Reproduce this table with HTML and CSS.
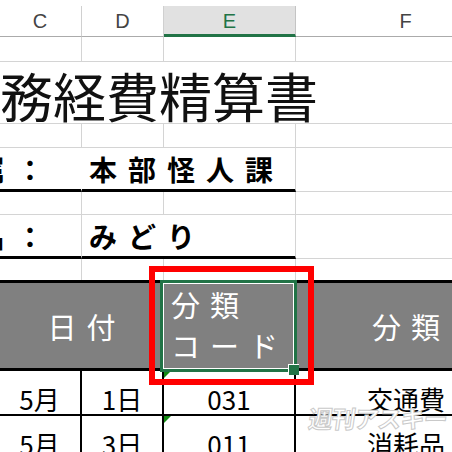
FILE: index.html
```html
<!DOCTYPE html>
<html lang="ja">
<head>
  <meta charset="UTF-8" />
  <meta name="viewport" content="width=device-width, initial-scale=1.0"/>
  <title>事務経費精算書</title>
  <link rel="stylesheet" href="styles.css">
</head>
<body>

  <div class="sheet">

    <!-- Column headers -->
    <div class="col-head">
      <div class="ch cb"></div>
      <div class="ch cc">C</div>
      <div class="ch cd">D</div>
      <div class="ch ce active">E</div>
      <div class="ch cf">F</div>
    </div>

    <!-- Rows -->
    <div class="row r-blank1">
      <div class="cell cb"></div>
      <div class="cell cc"></div>
      <div class="cell cd"></div>
      <div class="cell ce"></div>
      <div class="cell cf"></div>
    </div>

    <div class="row r-title">
      <div class="cell all title">事務経費精算書</div>
    </div>

    <div class="row r-blank2">
      <div class="cell cb"></div>
      <div class="cell cc"></div>
      <div class="cell cd"></div>
      <div class="cell ce"></div>
      <div class="cell cf"></div>
    </div>

    <div class="row r-field">
      <div class="cell bc label under no-right">所属：</div>
      <div class="cell de value under">本部怪人課</div>
      <div class="cell cf"></div>
    </div>

    <div class="row r-blank3">
      <div class="cell cb"></div>
      <div class="cell cc"></div>
      <div class="cell cd"></div>
      <div class="cell ce"></div>
      <div class="cell cf"></div>
    </div>

    <div class="row r-field">
      <div class="cell bc label under">氏名：</div>
      <div class="cell de value under">みどり</div>
      <div class="cell cf"></div>
    </div>

    <div class="row r-blank4">
      <div class="cell cb no-bottom"></div>
      <div class="cell cc no-bottom"></div>
      <div class="cell cd no-bottom"></div>
      <div class="cell ce no-bottom"></div>
      <div class="cell cf no-bottom"></div>
    </div>

    <div class="row r-head">
      <div class="cell cb hd"></div>
      <div class="cell cd2 hd center">日付</div>
      <div class="cell ce hd code">分類<br>コード</div>
      <div class="cell cf hd center">分類</div>
    </div>

    <div class="row r-data">
      <div class="cell cb dt"></div>
      <div class="cell cc dt">5月</div>
      <div class="cell cd dt">1日</div>
      <div class="cell ce dt flag">031</div>
      <div class="cell cf dt">交通費</div>
    </div>

    <div class="row r-data">
      <div class="cell cb dt"></div>
      <div class="cell cc dt">5月</div>
      <div class="cell cd dt">3日</div>
      <div class="cell ce dt flag">011</div>
      <div class="cell cf dt">消耗品</div>
    </div>

    <!-- Overlays: selection, annotation, watermark -->
    <div class="selection"></div>
    <div class="fill-handle"></div>
    <div class="callout"></div>
    <div class="watermark">週刊アスキー</div>

  </div>

</body>
</html>
```

FILE: styles.css
```css
body {
  margin: 0;
  font-family: "Noto Sans CJK JP", sans-serif;
  background: #fff;
}

.sheet {
  position: relative;
  width: 452px;
  height: 452px;
  padding-top: 6px;
  box-sizing: border-box;
  overflow: hidden;
}

.col-head, .row {
  display: flex;
  margin-left: -81px;
  width: max-content;
}

/* column widths */
.cb { width: 80px; }
.cc { width: 83px; }
.cd { width: 82px; }
.ce { width: 132px; }
.cf { width: 220px; }
.bc { width: 163px; }
.cd2 { width: 165px; }
.de { width: 214px; }
.all { width: 597px; }

/* column header strip */
.col-head {
  height: 31px;
}

.ch {
  box-sizing: border-box;
  flex: none;
  display: flex;
  align-items: center;
  justify-content: center;
  border-right: 1px solid #d0d0d0;
  border-bottom: 1px solid #ababab;
  font-family: "Liberation Sans", Arial, sans-serif;
  font-size: 20px;
  color: #444;
  padding-top: 1px;
}

.ch.active {
  background: #e1e1e1;
  border-right-color: #c4c4c4;
  border-bottom: 3px solid #217346;
  color: #217346;
  padding-top: 3px;
}

/* cells */
.cell {
  box-sizing: border-box;
  flex: none;
  display: flex;
  align-items: center;
  border-right: 1px solid #d4d4d4;
  border-bottom: 1px solid #d4d4d4;
  white-space: nowrap;
}

.no-right { border-right-color: transparent; }
.no-bottom { border-bottom: none; }

.r-blank1 { height: 25px; }
.r-title { height: 62px; }
.r-blank2 { height: 24px; }
.r-field { height: 44px; }
.r-blank3 { height: 23px; }
.r-blank4 { height: 21px; }
.r-head { height: 91px; }
.r-data { height: 45px; }

.title {
  font-size: 53px;
  padding-left: 28px;
  padding-top: 5px;
  color: #111;
  border-right: none;
}

.label, .value {
  font-size: 28px;
  font-weight: 700;
  letter-spacing: 11px;
  color: #000;
}

.label { padding-left: 19px; }
.value { padding-left: 7px; }

.under {
  border-bottom: 3px solid #000;
}

/* table header */
.hd {
  background: #808080;
  color: #fff;
  font-size: 29px;
  letter-spacing: 10px;
  border-top: 3px solid #000;
  border-bottom: 3px solid #000;
  border-right: none;
}

.center {
  justify-content: center;
  padding-left: 10px;
}

.code {
  align-items: flex-start;
  padding-left: 7px;
  padding-top: 1px;
  line-height: 41px;
  white-space: normal;
}

/* data rows */
.dt {
  justify-content: center;
  align-items: flex-end;
  font-size: 26px;
  line-height: 30px;
  color: #000;
  border-right: 2px solid #000;
  border-bottom: 2px solid #000;
}

.cf.dt { border-right: none; }

.flag { position: relative; }

.flag::before {
  content: "";
  position: absolute;
  left: 0;
  top: 0;
  border-top: 7px solid #138a13;
  border-right: 7px solid transparent;
}

/* selection + callout */
.selection {
  position: absolute;
  left: 160px;
  top: 280px;
  width: 137px;
  height: 92px;
  box-sizing: border-box;
  border: 3px solid #217346;
}

.selection::after {
  content: "";
  position: absolute;
  inset: 0;
  border: 1px solid #fff;
}

.fill-handle {
  position: absolute;
  left: 288px;
  top: 364px;
  width: 11px;
  height: 11px;
  box-sizing: border-box;
  background: #217346;
  border-left: 1px solid #fff;
  border-top: 1px solid #fff;
}

.callout {
  position: absolute;
  left: 149px;
  top: 266px;
  width: 165px;
  height: 119px;
  box-sizing: border-box;
  border: 6px solid #ff0000;
}

.watermark {
  position: absolute;
  left: 309px;
  top: 400px;
  font-size: 24px;
  font-weight: 700;
  letter-spacing: -1px;
  color: #fff;
  -webkit-text-stroke: 1px #c9c9c9;
  transform: skewX(-8deg);
  white-space: nowrap;
}
```
